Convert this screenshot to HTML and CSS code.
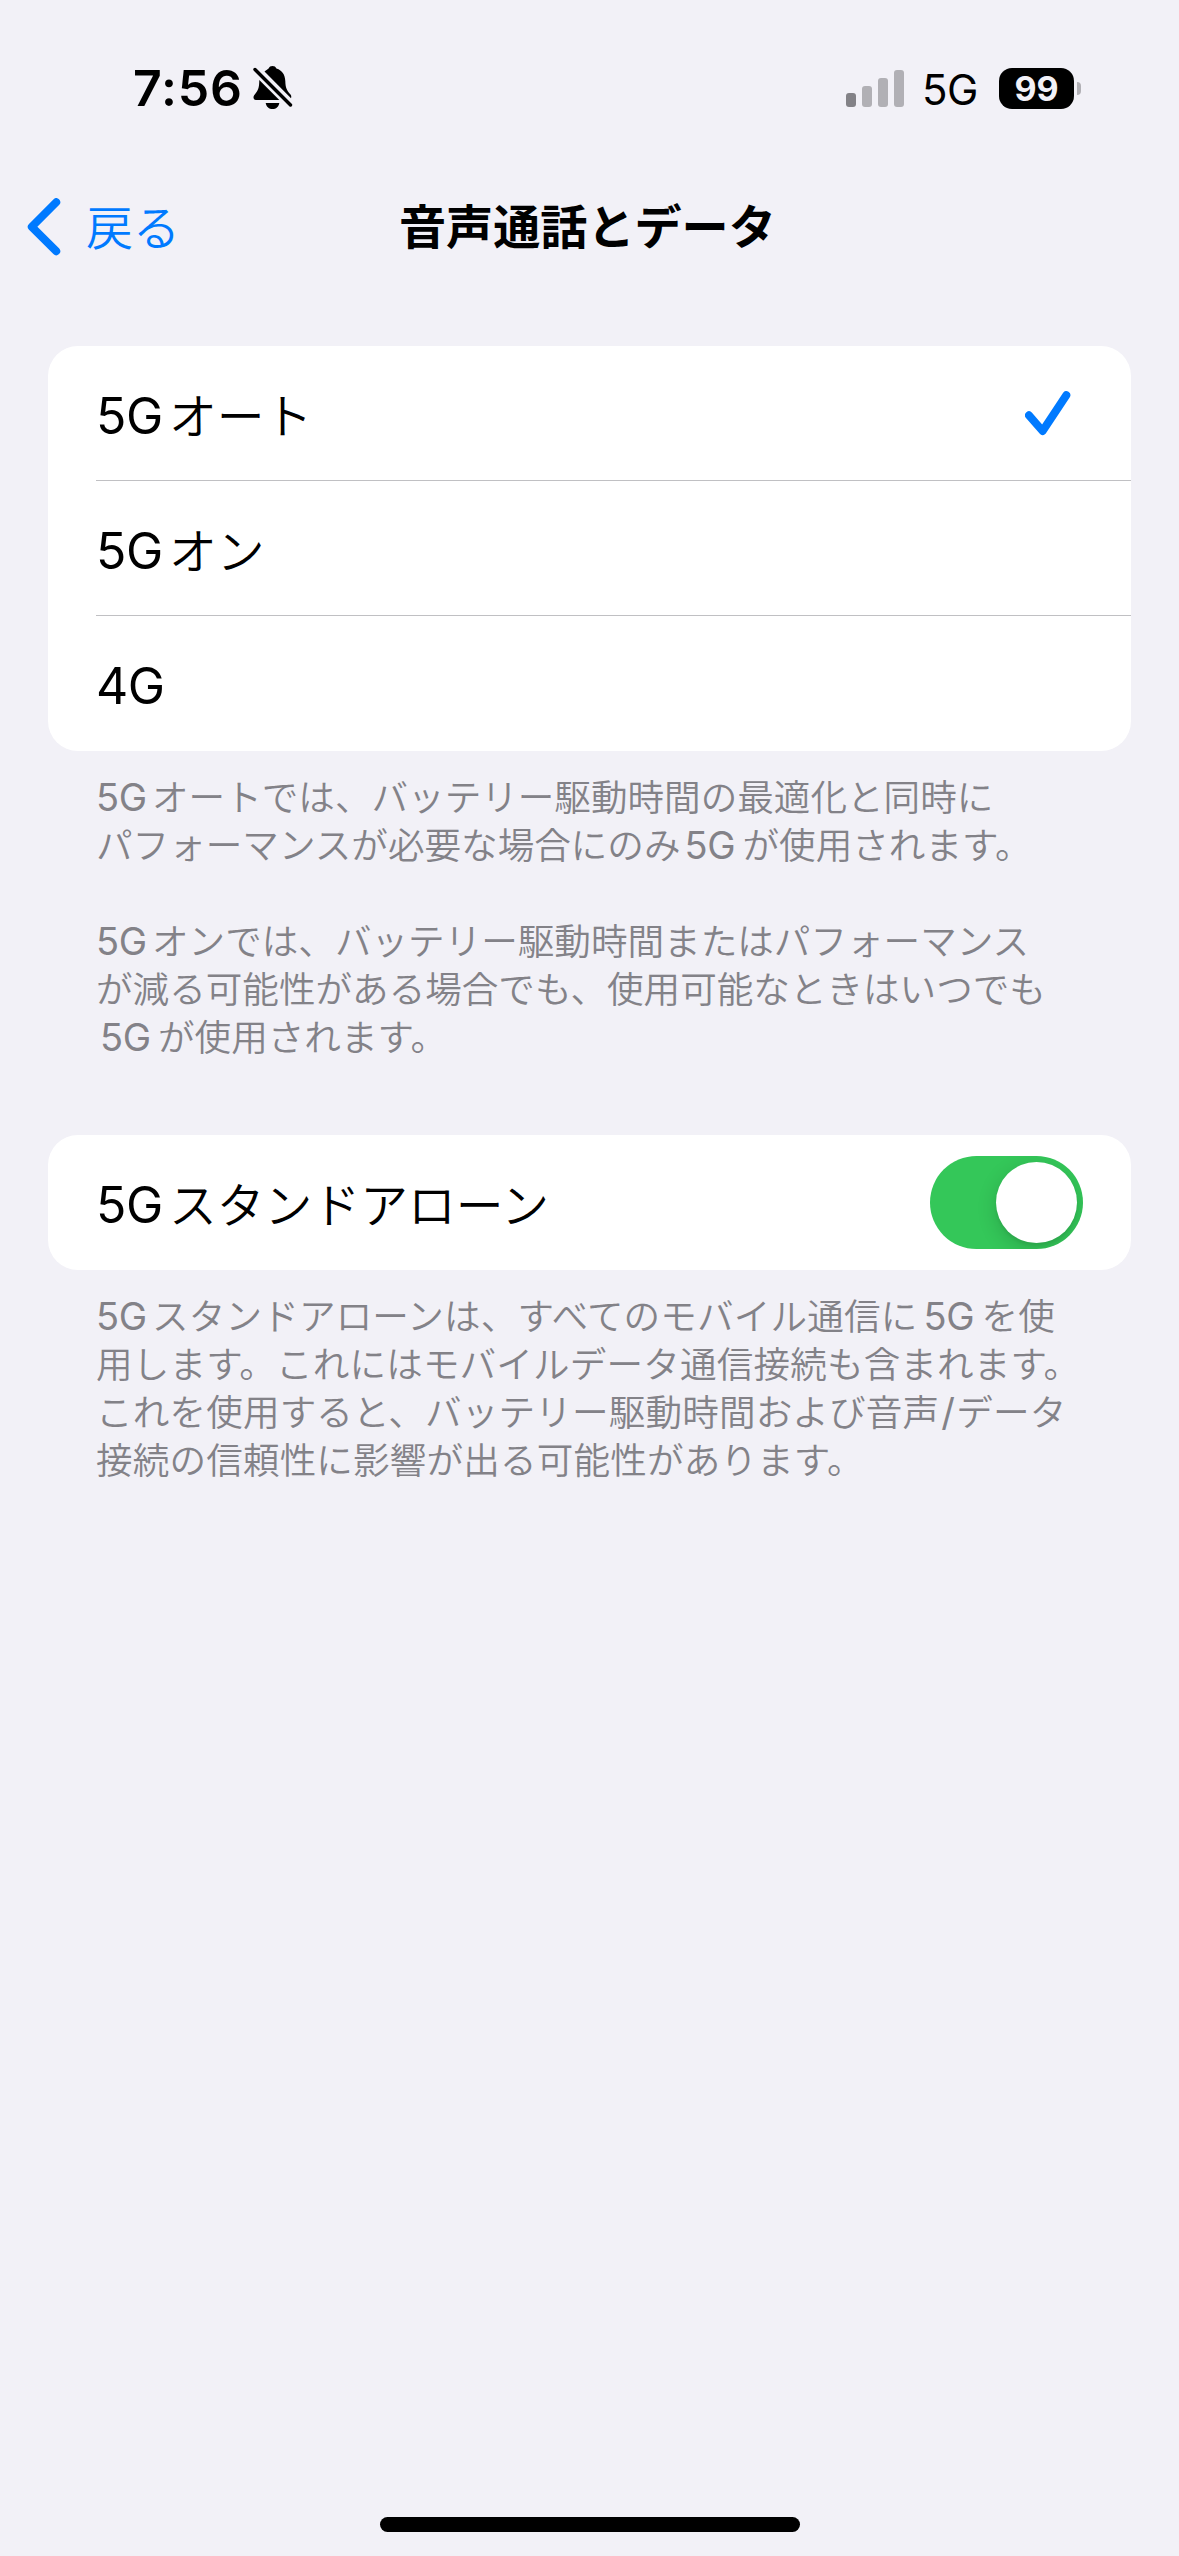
FILE: index.html
```html
<!DOCTYPE html>
<html lang="ja">
<head>
<meta charset="utf-8">
<title>音声通話とデータ</title>
<link rel="stylesheet" href="styles.css">
</head>
<body>
<div class="screen">
  <header class="status">
    <span class="time">7:56</span>
    <svg class="bell" width="40" height="44" viewBox="0 0 40 44">
      <path d="M11.5 5.5C13.5 4 14.8 3.4 15.6 2.6C16.3 .8 17.6 0 19.5 0C21.4 0 22.700 .8 23.400 2.600C29.500 4.500 32 9 32.300 15C32.500 21.500 33.500 24 37.500 28.500C38.300 29.500 38.600 31 38 32.300Z"/>
      <path d="M6.300 14L26.300 34H3C.500 34-.3 31 1.300 28.900C5 25 6.300 22 6.300 14Z"/>
      <path d="M12.700 37H26.300C25.500 41 23 43 19.500 43C16 43 13.500 41 12.700 37Z"/>
      <path class="slash" d="M2 3.500L37.500 39"/>
    </svg>
    <div class="indicators">
      <div class="signal"><i class="bar b1"></i><i class="bar b2"></i><i class="bar b3"></i><i class="bar b4"></i></div>
      <span class="network">5G</span>
      <div class="battery"><span class="level">99</span></div>
      <i class="nub"></i>
    </div>
  </header>

  <nav class="nav">
    <a class="back">
      <svg width="34" height="58" viewBox="0 0 34 58"><path d="M29.200 4.200L4.800 28.800L29.200 53.200"/></svg>
      <span class="back-text">戻る</span>
    </a>
    <h1 class="title">音声通話とデータ</h1>
  </nav>

  <main class="content">
    <section class="card">
      <div class="row"><span class="label"><span class="gen">5G</span>オート</span>
        <svg class="check" width="46" height="46" viewBox="0 0 46 46"><path d="M4 24.300L17.600 40L41.300 4.200"/></svg>
      </div>
      <div class="row"><span class="label"><span class="gen">5G</span>オン</span></div>
      <div class="row"><span class="label"><span class="gen">4G</span></span></div>
    </section>
    <div class="note">
      <p><span class="gen">5G</span>オートでは、バッテリー駆動時間の最適化と同時に<br>パフォーマンスが必要な場合にのみ<span class="gen inner">5G</span>が使用されます。</p>
      <p><span class="gen">5G</span>オンでは、バッテリー駆動時間またはパフォーマンス<br>が減る可能性がある場合でも、使用可能なときはいつでも<br><span class="gen inner">5G</span>が使用されます。</p>
    </div>

    <section class="card">
      <div class="row"><span class="label"><span class="gen">5G</span>スタンドアローン</span>
        <span class="toggle"><i class="knob"></i></span>
      </div>
    </section>
    <div class="note last">
      <p><span class="gen">5G</span>スタンドアローンは、すべてのモバイル通信に<span class="gen inner">5G</span>を使<br>用します。これにはモバイルデータ通信接続も含まれます。<br>これを使用すると、バッテリー駆動時間および音声<span class="gen mark">/</span>データ<br>接続の信頼性に影響が出る可能性があります。</p>
    </div>
  </main>
  <div class="home"></div>
</div>
</body>
</html>
```

FILE: styles.css
```css
* { box-sizing: border-box; margin: 0; padding: 0; }
body { background: #f2f1f7; }
.screen {
  width: 1179px;
  height: 2556px;
  display: flex;
  flex-direction: column;
  background: #f2f1f7;
  color: #000;
  font-family: "Noto Sans CJK JP", sans-serif;
  font-weight: 350;
  overflow: hidden;
}

/* Status bar */
.status {
  height: 176px;
  padding: 0 98px 0 133px;
  display: flex;
  align-items: center;
  font-family: Inter, sans-serif;
}
.time { width: 120px; font-size: 50px; font-weight: 600; line-height: 60px; letter-spacing: 0.8px; }
.bell { fill: #000; }
.slash { fill: none; stroke: #000; stroke-width: 3.4; stroke-linecap: round; }
.indicators { margin-left: auto; display: flex; align-items: center; height: 42px; }
.signal { display: flex; align-items: flex-end; gap: 6px; height: 37px; margin-right: 18px; }
.bar { width: 10px; border-radius: 3px; background: #b1b0b5; }
.b1 { height: 14px; background: #838287; }
.b2 { height: 21px; }
.b3 { height: 29px; }
.b4 { height: 37px; }
.network { width: 77px; padding-top: 2px; font-size: 42px; font-weight: 400; white-space: nowrap; letter-spacing: -0.5px; }
.battery {
  width: 75px; height: 41px; border-radius: 13px; background: #000;
  display: flex; align-items: center; justify-content: center;
}
.level { color: #f2f1f7; font-size: 34px; font-weight: 700; line-height: 41px; }
.nub { width: 4px; height: 13px; margin-left: 3px; border-radius: 0 4px 4px 0; background: #b1b0b5; }

/* Navigation bar */
.nav {
  height: 102px;
  padding-left: 27px;
  display: grid;
  grid-template-columns: 372px 404px 1fr;
  align-items: center;
}
.back { display: flex; align-items: center; gap: 25px; color: #007aff; font-size: 47px; line-height: 60px; }
.back-text { padding-bottom: 5px; }
.back path, .check path { fill: none; stroke: #007aff; stroke-width: 8; stroke-linecap: round; stroke-linejoin: round; }
.title { padding-bottom: 6px; font-size: 47.1px; font-weight: 700; line-height: 60px; white-space: nowrap; }

/* Grouped lists */
.content { flex: 1; padding: 68px 48px 0; }
.card { background: #fff; border-radius: 30px; padding-left: 48px; }
.row {
  height: 135px;
  padding-right: 48px;
  display: flex;
  align-items: center;
  justify-content: space-between;
}
.row + .row { box-shadow: 0 -1px #c0c0c3; }
.label { padding-top: 3px; font-size: 47.8px; line-height: 60px; white-space: nowrap; }
.gen { display: inline-block; font-family: Inter, sans-serif; font-weight: 400; }
.label .gen { width: 73px; font-size: 50px; letter-spacing: -0.5px; }
.check { margin-right: 12px; }

.note {
  padding: 21px 0 0 48px;
  margin-bottom: 75px;
  color: #838288;
  font-size: 36.6px;
  line-height: 48px;
  white-space: nowrap;
}
.note p + p { margin-top: 48px; }
.note .gen { width: 56px; font-size: 38px; line-height: 40px; letter-spacing: -0.4px; }
.note .inner { width: 62px; padding-left: 4px; }
.last { letter-spacing: 0.15px; }
.last .inner { width: 64px; padding-left: 6px; }
.note .mark { width: 17px; padding-left: 2px; }

.toggle { width: 153px; height: 93px; padding: 6px; border-radius: 47px; background: #34c759; display: flex; justify-content: flex-end; overflow: hidden; }
.knob { width: 81px; height: 81px; border-radius: 50%; background: #fff; box-shadow: 0 6px 20px rgba(0, 0, 0, .16), 0 3px 3px rgba(0, 0, 0, .06); }

.home { width: 420px; height: 15px; margin: 0 auto 24px; border-radius: 8px; background: #000; }
```
